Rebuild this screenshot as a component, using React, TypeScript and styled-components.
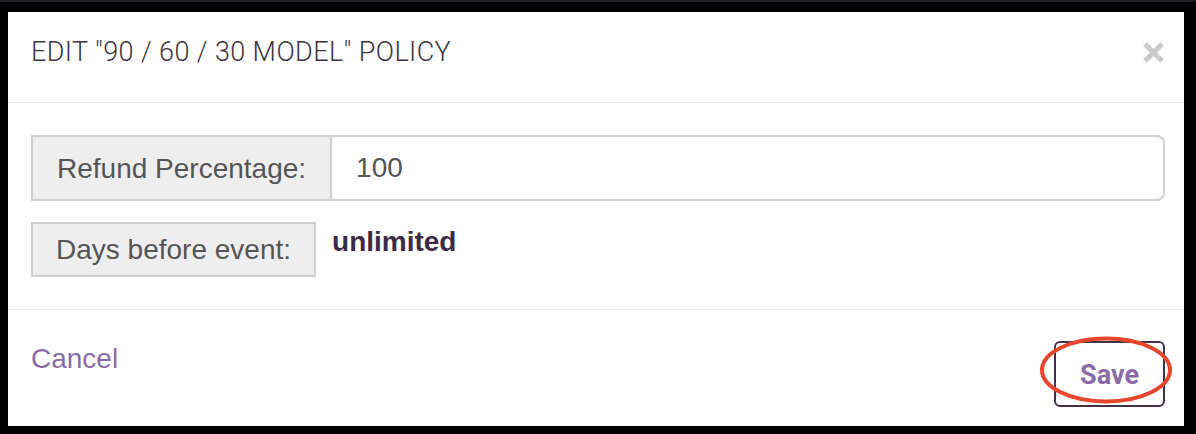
import styled, { createGlobalStyle } from "styled-components";

const GlobalStyle = createGlobalStyle`
  html, body {
    margin: 0;
    padding: 0;
    background: #000;
  }
  * {
    box-sizing: border-box;
  }
`;

const Backdrop = styled.div`
  width: 1196px;
  height: 434px;
  padding: 10px 12px 8px 8px;
  background: #000;
  border-top: 2px solid #1d1b22;
`;

const Modal = styled.div`
  width: 1176px;
  height: 414px;
  background: #fff;
  display: flex;
  flex-direction: column;
  font-family: "Liberation Sans", Arial, sans-serif;
`;

const Header = styled.div`
  height: 91px;
  display: flex;
  align-items: flex-start;
  justify-content: space-between;
  padding: 25px 19px 0 23px;
  border-bottom: 1px solid #e5e5e5;
`;

const Title = styled.h4`
  margin: 0;
  font-family: Roboto, "Liberation Sans", sans-serif;
  font-weight: 300;
  font-size: 27px;
  letter-spacing: 0.4px;
  line-height: 31px;
  color: #3b3444;
`;

const CloseButton = styled.button`
  margin-top: 4px;
  padding: 0;
  border: none;
  background: none;
  width: 23px;
  height: 23px;
  display: flex;
  cursor: pointer;
`;

const Body = styled.div`
  padding: 32px 19px 32px 23px;
  display: flex;
  flex-direction: column;
  gap: 21px;
  border-bottom: 1px solid #e5e5e5;
`;

const InputGroup = styled.div`
  display: flex;
  height: 66px;
`;

const Addon = styled.span<{ $joined?: boolean }>`
  display: flex;
  align-items: center;
  padding: ${(p) => (p.$joined ? "0 24px" : "9px 23px")};
  background: #eeeeee;
  border: 2px solid #cfcfcf;
  color: #555;
  font-size: 28px;
  line-height: 33px;
  white-space: nowrap;
  ${(p) => p.$joined && "border-right-width: 1px;"}
`;

const Input = styled.input`
  flex: 1;
  min-width: 0;
  border: 2px solid #cfcfcf;
  border-left-width: 1px;
  border-radius: 0 8px 8px 0;
  padding: 0 24px;
  font-family: "Liberation Sans", Arial, sans-serif;
  font-size: 28px;
  color: #555;
  outline: none;
`;

const StaticRow = styled.div`
  display: flex;
  align-items: flex-start;
  gap: 16px;
`;

const StaticValue = styled.span`
  font-weight: 700;
  font-size: 28px;
  line-height: 39px;
  color: #3b2b46;
`;

const Footer = styled.div`
  flex: 1;
  display: flex;
  align-items: flex-start;
  justify-content: space-between;
  padding: 31px 19px 0 23px;
`;

const CancelLink = styled.a`
  margin-top: -2px;
  font-size: 28px;
  line-height: 39px;
  color: #8b6ba7;
  text-decoration: none;
  cursor: pointer;
`;

const SaveWrap = styled.div`
  position: relative;
`;

const SaveButton = styled.button`
  width: 111px;
  height: 66px;
  border: 2px solid #3f3249;
  border-radius: 6px;
  background: #fff;
  font-family: Roboto, "Liberation Sans", sans-serif;
  font-weight: 700;
  font-size: 27px;
  color: #8b6ba7;
  padding: 1px 0 0;
  cursor: pointer;
`;

const Highlight = styled.svg`
  position: absolute;
  left: -16px;
  top: -6px;
  pointer-events: none;
`;

export default function App() {
  return (
    <>
      <GlobalStyle />
      <Backdrop>
        <Modal>
          <Header>
            <Title>EDIT "90 / 60 / 30 MODEL" POLICY</Title>
            <CloseButton aria-label="Close">
              <svg width="23" height="23" viewBox="0 0 23 23">
                <path
                  d="M3 3 L20 20 M20 3 L3 20"
                  stroke="#c9c9c9"
                  strokeWidth="5"
                  fill="none"
                />
              </svg>
            </CloseButton>
          </Header>
          <Body>
            <InputGroup>
              <Addon $joined>Refund Percentage:</Addon>
              <Input defaultValue="100" />
            </InputGroup>
            <StaticRow>
              <Addon>Days before event:</Addon>
              <StaticValue>unlimited</StaticValue>
            </StaticRow>
          </Body>
          <Footer>
            <CancelLink>Cancel</CancelLink>
            <SaveWrap>
              <SaveButton>Save</SaveButton>
              <Highlight width="136" height="70" viewBox="0 0 136 70">
                <ellipse
                  cx="68"
                  cy="35"
                  rx="64"
                  ry="31.5"
                  fill="none"
                  stroke="#e8462c"
                  strokeWidth="4"
                />
              </Highlight>
            </SaveWrap>
          </Footer>
        </Modal>
      </Backdrop>
    </>
  );
}
